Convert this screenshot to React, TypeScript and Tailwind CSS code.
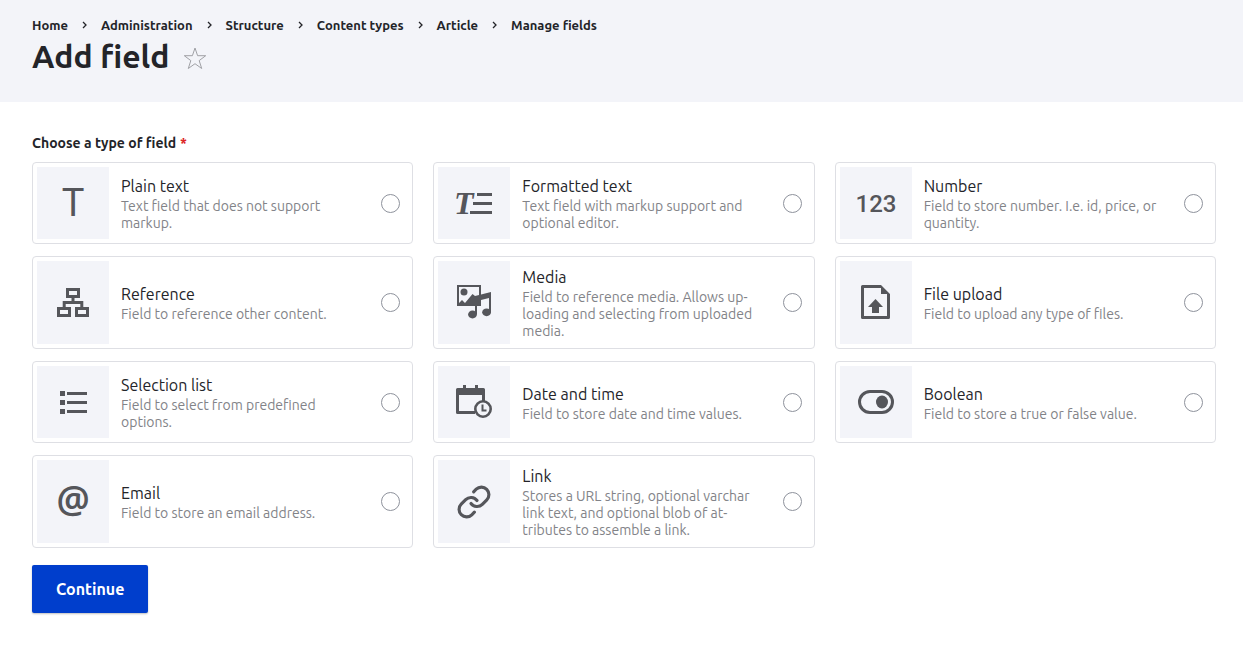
import React, { useState } from 'react';
import { Link } from 'lucide-react';

interface FieldType {
  id: string;
  label: string;
  description: string;
  icon: React.ReactNode;
}

const breadcrumbs = ['Home', 'Administration', 'Structure', 'Content types', 'Article', 'Manage fields'];

interface GlyphProps {
  children: React.ReactNode;
}

const Glyph: React.FC<GlyphProps> = ({ children }) => (
  <svg viewBox="0 0 36 36" className="h-9 w-9 overflow-visible fill-current" aria-hidden="true">
    {children}
  </svg>
);

const fieldTypes: FieldType[] = [
  {
    id: 'plain_text',
    label: 'Plain text',
    description: 'Text field that does not support markup.',
    icon: (
      <Glyph>
        <text x="18" y="31" textAnchor="middle" className="font-['Roboto',sans-serif] text-[38px]">T</text>
      </Glyph>
    ),
  },
  {
    id: 'formatted_text',
    label: 'Formatted text',
    description: 'Text field with markup support and optional editor.',
    icon: (
      <Glyph>
        <text x="-2" y="29" className="font-['Liberation_Serif',serif] text-[32px] font-bold italic">T</text>
        <path d="M21 8h15v3H21zM17 17h19v3H17zM14 26h22v3H14z" />
      </Glyph>
    ),
  },
  {
    id: 'number',
    label: 'Number',
    description: 'Field to store number. I.e. id, price, or quantity.',
    icon: (
      <Glyph>
        <text x="18" y="27" textAnchor="middle" className="font-['Roboto',sans-serif] text-[24px] font-medium">
          123
        </text>
      </Glyph>
    ),
  },
  {
    id: 'reference',
    label: 'Reference',
    description: 'Field to reference other content.',
    icon: (
      <Glyph>
        <path
          d="M12.5 4.5h11v7h-11zM3.5 23.5h11v7h-11zM21.5 23.5h11v7h-11zM18 12v5M9.200 23v-5.500h17.600V23"
          fill="none"
          stroke="currentColor"
          strokeWidth="3"
        />
      </Glyph>
    ),
  },
  {
    id: 'media',
    label: 'Media',
    description: 'Field to reference media. Allows up\u00adloading and selecting from uploaded media.',
    icon: (
      <Glyph>
        <g transform="translate(0 -1)">
          <path d="M1 1h24v9.500L35 8v5.500L25 16v6H1zM3 3v16l3-3 3 3 7.500-9 2.500 2 4-1V3z" fillRule="evenodd" />
          <circle cx="8" cy="8" r="3.500" />
          <path d="M19 21h2v9h-2zM33 9h2v19h-2z" />
          <ellipse cx="16.500" cy="30.500" rx="4.400" ry="3.900" />
          <ellipse cx="30.600" cy="28.300" rx="4.400" ry="3.900" />
        </g>
      </Glyph>
    ),
  },
  {
    id: 'file_upload',
    label: 'File upload',
    description: 'Field to upload any type of files.',
    icon: (
      <Glyph>
        <g transform="translate(0 -1)">
          <path
            d="M4.500 1H23l9 9v23.500a1.500 1.500 0 0 1-1.500 1.500h-26A1.500 1.500 0 0 1 3 33.500v-31A1.500 1.500 0 0 1 4.500 1zM6 4v28h23V10h-6V4z"
            fillRule="evenodd"
          />
          <path d="M17.500 15l7.500 8h-4v6h-7v-6h-4z" />
        </g>
      </Glyph>
    ),
  },
  {
    id: 'selection_list',
    label: 'Selection list',
    description: 'Field to select from predefined options.',
    icon: (
      <Glyph>
        <path d="M5 7h5v5H5zM5 16h5v5H5zM5 25h5v5H5zM12 8h20v3H12zM12 17h20v3H12zM12 26h20v3H12z" />
      </Glyph>
    ),
  },
  {
    id: 'date_time',
    label: 'Date and time',
    description: 'Field to store date and time values.',
    icon: (
      <Glyph>
        <path
          d="M7 1h3v3h9V1h3v3h5.500A1.500 1.500 0 0 1 29 5.500V18h-3v-7H3v16h16v3H1.500A1.500 1.500 0 0 1 0 28.500v-23A1.500 1.500 0 0 1 1.500 4H7z"
          fillRule="evenodd"
        />
        <circle cx="27" cy="25" r="7.700" fill="#f3f4f9" stroke="currentColor" strokeWidth="2.600" />
        <path d="M26.500 20.500v6h4" fill="none" stroke="currentColor" strokeWidth="2" />
      </Glyph>
    ),
  },
  {
    id: 'boolean',
    label: 'Boolean',
    description: 'Field to store a true or false value.',
    icon: (
      <Glyph>
        <rect x="1.500" y="7.500" width="33" height="21" rx="10.500" fill="none" stroke="currentColor" strokeWidth="3" />
        <ellipse cx="24" cy="18" rx="6" ry="6.500" />
      </Glyph>
    ),
  },
  {
    id: 'email',
    label: 'Email',
    description: 'Field to store an email address.',
    icon: (
      <Glyph>
        <text x="18" y="29" textAnchor="middle" className="font-['Noto_Sans',sans-serif] text-[37px] font-semibold">
          @
        </text>
      </Glyph>
    ),
  },
  {
    id: 'link',
    label: 'Link',
    description: 'Stores a URL string, optional varchar link text, and optional blob of at\u00adtributes to assemble a link.',
    icon: <Link className="h-9 w-9" strokeWidth={2.1} />,
  },
];

interface FieldCardProps {
  field: FieldType;
  checked: boolean;
  onSelect: (id: string) => void;
}

const FieldCard: React.FC<FieldCardProps> = ({ field, checked, onSelect }) => (
  <label
    htmlFor={field.id}
    className="flex cursor-pointer items-center rounded-[4px] border border-[#dedfe4] bg-white p-1 pr-3 hover:border-[#919297]"
  >
    <span className="flex min-h-18 w-18 shrink-0 items-center justify-center self-stretch bg-[#f3f4f9] text-[#55565b]">
      {field.icon}
    </span>
    <span className="flex min-w-0 flex-1 flex-col py-1 pr-6 pl-3">
      <span className="text-base leading-6 text-[#232429]">{field.label}</span>
      <span className="text-sm leading-[17px] text-[#828388]">{field.description}</span>
    </span>
    <input
      type="radio"
      id={field.id}
      name="field_type"
      checked={checked}
      onChange={() => onSelect(field.id)}
      className="h-[19px] w-[19px] shrink-0 appearance-none rounded-full border border-[#8e929c] bg-white checked:border-[6px] checked:border-[#003ecc]"
    />
  </label>
);

const App: React.FC = () => {
  const [selected, setSelected] = useState<string | null>(null);

  return (
    <div className="min-h-screen bg-white font-['Ubuntu','Noto_Sans',sans-serif] text-[#232429]" lang="en">
      <header className="bg-[#f3f4f9] px-8 pt-[15px] pb-[25px]">
        <nav aria-label="Breadcrumb">
          <ol className="flex flex-wrap items-center text-[13px] leading-5 font-bold">
            {breadcrumbs.map((crumb, index) => (
              <li key={crumb} className="flex items-center">
                {index > 0 && (
                  <svg viewBox="0 0 5 8" className="mx-[14px] h-2 w-[5px]" aria-hidden="true">
                    <path d="M1 1l3 3-3 3" fill="none" stroke="currentColor" strokeWidth="1.300" />
                  </svg>
                )}
                <a href="#" className="hover:underline">{crumb}</a>
              </li>
            ))}
          </ol>
        </nav>
        <div className="flex items-center gap-[14px]">
          <h1 className="text-[32px] leading-[42px] font-bold">Add field</h1>
          <button type="button" aria-label="Add to shortcuts" className="mt-1 text-[#a0a1a6]">
            <svg viewBox="0 0 24 24" className="h-6 w-6" aria-hidden="true">
              <path
                d="M12 2l2.600 7.700h8.100l-6.500 4.900 2.500 7.900L12 17.700l-6.700 4.800 2.500-7.900-6.500-4.900h8.100z"
                fill="none"
                stroke="currentColor"
              />
            </svg>
          </button>
        </div>
      </header>

      <main className="pt-[31px] pr-[27px] pb-8 pl-8">
        <form onSubmit={(e) => e.preventDefault()}>
          <fieldset>
            <legend className="text-sm leading-5 font-bold">
              Choose a type of field
              <span className="ml-1 text-[#dc2323]">*</span>
            </legend>
            <div className="mt-[9px] grid grid-cols-1 gap-x-5 gap-y-3 md:grid-cols-2 lg:grid-cols-3">
              {fieldTypes.map((field) => (
                <FieldCard
                  key={field.id}
                  field={field}
                  checked={selected === field.id}
                  onSelect={setSelected}
                />
              ))}
            </div>
          </fieldset>
          <button
            type="submit"
            className="mt-[17px] h-12 rounded-[2px] bg-[#003ecc] px-6 text-base font-bold text-white shadow-[0_1px_2px_rgba(0,0,0,0.25)] hover:bg-[#0036b1]"
          >
            Continue
          </button>
        </form>
      </main>
    </div>
  );
};

export default App;
